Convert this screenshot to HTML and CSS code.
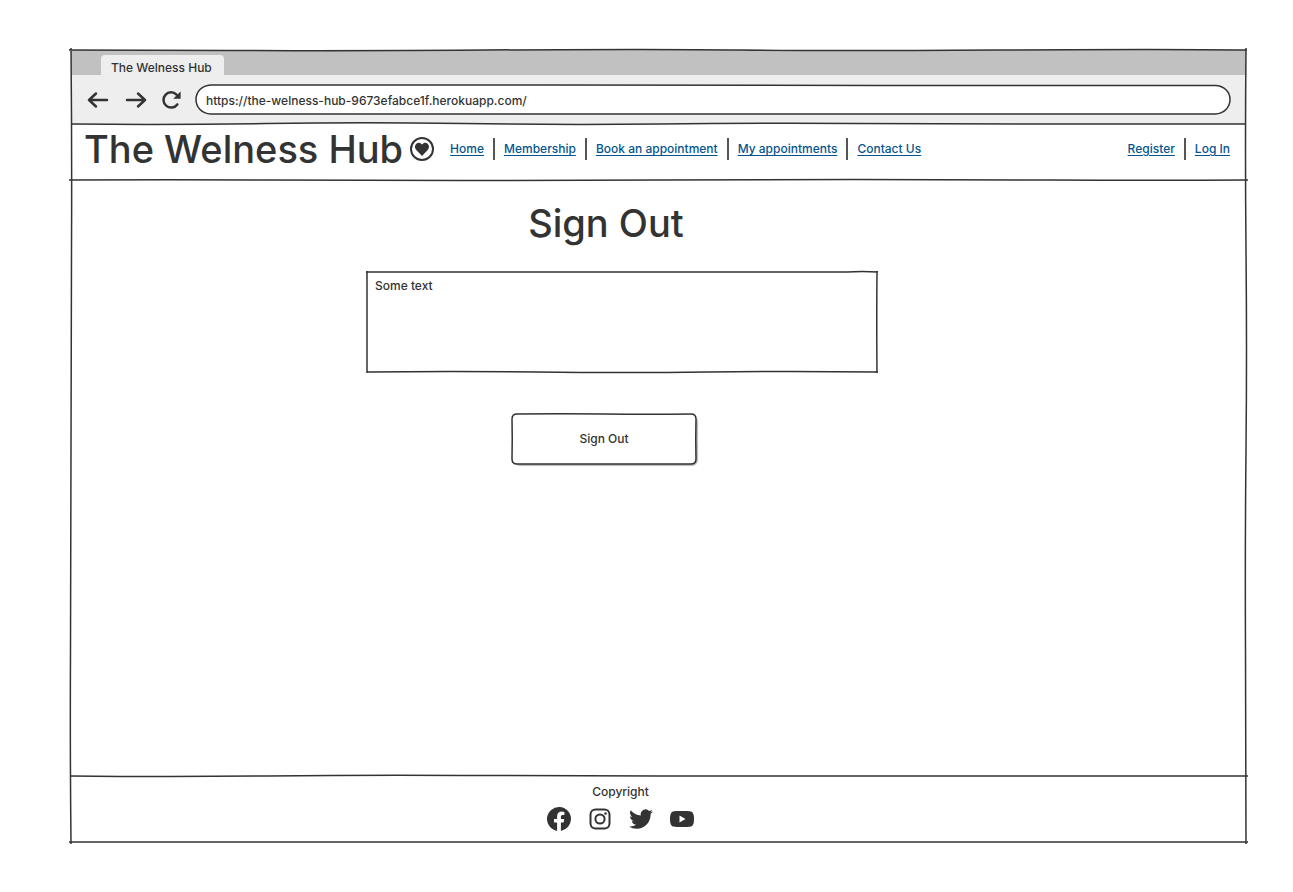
FILE: index.html
```html
<!DOCTYPE html>
<html lang="en">
<head>
<meta charset="utf-8">
<title>The Welness Hub</title>
<link rel="stylesheet" href="styles.css">
</head>
<body>
<div class="browser">
  <div class="tabs">
    <div class="tab">The Welness Hub</div>
  </div>
  <div class="toolbar">
    <button class="tool" type="button" aria-label="Back"><svg width="22" height="18" viewBox="0 0 22 18"><path d="M20 9H2M9 2.500L2 9l7 6.500"/></svg></button>
    <button class="tool" type="button" aria-label="Forward"><svg width="22" height="18" viewBox="0 0 22 18"><path d="M2 9h18M13 2.500L20 9l-7 6.500"/></svg></button>
    <button class="tool reload" type="button" aria-label="Reload"><svg width="20" height="18" viewBox="0 0 20 18"><path d="M14.500 3.600A7.600 7.600 0 1 0 15.300 13.400"/><path class="solid" d="M18.600 .400v7.400h-7.400z"/></svg></button>
    <div class="address">
      <input class="url" type="text" aria-label="Address" value="https://the-welness-hub-9673efabce1f.herokuapp.com/">
      <svg class="sketch" viewBox="0 0 1034 29" preserveAspectRatio="none"><path d="M15 0Q180-.5 350 0T685 .500T1019 .500C1039 1 1039 28 1019 29Q850 29.500 685 29T350 29T15 29C-5 28-5 1 15 0z"/></svg>
    </div>
    <svg class="rule" viewBox="0 0 1175 4" preserveAspectRatio="none"><path d="M0 2Q98 3 196 1.500T392 1.500T588 2T784 1.500T980 2T1175 2"/></svg>
  </div>
  <header class="header">
    <div class="brand">The Welness Hub</div>
    <svg class="heart" width="24" height="24" viewBox="0 0 24 24"><circle cx="12" cy="12" r="11"/><path d="M12 19L6.300 12.900C3.300 9.500 6 5.200 9.400 5.800Q11.100 6.200 12 7.600Q12.900 6.200 14.600 5.800C18 5.200 20.700 9.500 17.700 12.900z"/></svg>
    <nav class="nav" aria-label="Main">
      <a href="#">Home</a>
      <a href="#">Membership</a>
      <a href="#">Book an appointment</a>
      <a href="#">My appointments</a>
      <a href="#">Contact Us</a>
    </nav>
    <nav class="nav account" aria-label="Account">
      <a href="#">Register</a>
      <a href="#">Log In</a>
    </nav>
    <svg class="rule" viewBox="0 0 1175 4" preserveAspectRatio="none"><path d="M-2 2Q98 1.500 196 2T392 2.500T588 2T784 1.500T980 2T1177 2"/></svg>
  </header>
  <main class="main">
    <form class="form">
      <h1 class="title">Sign Out</h1>
      <div class="message">
        <p>Some text</p>
        <svg class="sketch" viewBox="0 0 510 100" preserveAspectRatio="none"><path d="M-1 0H480Q495-1 511 0M510-1Q509.500 50 510 101M511 100Q420 99 340 100T170 100T0 100M0 101V-1"/></svg>
      </div>
      <button class="submit" type="submit">Sign Out
        <svg class="sketch" viewBox="0 0 184 50" preserveAspectRatio="none"><path d="M5 0Q48-.5 92 0T179 0Q184 0 184 5Q183.500 25 184 45Q184 50 179 50Q136 50 92 50T5 50Q0 50 0 45Q.5 25 0 5Q0 0 5 0z"/></svg>
      </button>
    </form>
    <svg class="rule" viewBox="0 0 1175 4" preserveAspectRatio="none"><path d="M0 2Q98 3 196 2T392 1.500T588 2T784 2T980 2T1177 2"/></svg>
  </main>
  <footer class="footer">
    <p>Copyright</p>
    <div class="social">
      <a href="#" aria-label="Facebook"><svg width="24" height="24" viewBox="0 0 24 24"><path d="M24 12A12 12 0 1 0 10.100 23.900V15.500H7V12h3.100V9.400C10.100 6.300 12 4.600 14.700 4.600Q16 4.600 17.400 4.900V7.900H15.800C14.300 7.900 13.900 8.800 13.900 9.800V12h3.300l-.6 3.500h-2.700v8.400A12 12 0 0 0 24 12z"/></svg></a>
      <a href="#" aria-label="Instagram"><svg class="outline" width="24" height="24" viewBox="0 0 24 24"><rect x="2.500" y="2.500" width="19" height="19" rx="5"/><circle cx="12" cy="12" r="4.600"/><circle class="dot" cx="17.500" cy="6.500" r="1.300"/></svg></a>
      <a href="#" aria-label="Twitter"><svg width="24" height="24" viewBox="0 0 24 24"><path d="M24 4.600a10 10 0 0 1-2.800.8A4.900 4.900 0 0 0 23.300 2.700a10 10 0 0 1-3.100 1.200A4.920 4.920 0 0 0 11.800 8.400 14 14 0 0 1 1.700 3.200a4.920 4.920 0 0 0 1.500 6.600A4.900 4.900 0 0 1 1 9.200c0 2.300 1.600 4.400 3.900 4.900a5 5 0 0 1-2.200.1 4.900 4.900 0 0 0 4.600 3.400A9.900 9.900 0 0 1 0 19.500a14 14 0 0 0 7.600 2.200c9.100 0 14.300-7.700 14-14.600A10 10 0 0 0 24 4.600z"/></svg></a>
      <a href="#" aria-label="YouTube"><svg width="24" height="24" viewBox="0 0 24 24"><path fill-rule="evenodd" d="M12 4C18 4 21 4.200 22 5Q24 6.500 24 12T22 19C21 19.800 18 20 12 20S3 19.800 2 19Q0 17.500 0 12T2 5C3 4.200 6 4 12 4zM9.500 8.500v7l6-3.500z"/></svg></a>
    </div>
  </footer>
  <svg class="sketch" viewBox="0 0 1175 792" preserveAspectRatio="none"><path d="M-2 0Q80 0 160 .500T415 0T670 0T925 0T1176 0M1175-2Q1174 100 1175 200T1175 400T1174.500 600T1175 794M1177 792Q980 791.500 785 792T390 792T-2 792M0 794Q-1 700-.5 600T0 400T.5 200T0-2"/></svg>
</div>
</body>
</html>
```
FILE: styles.css
```css
* { box-sizing: border-box; }
body {
  margin: 0;
  padding: 50px 47px 50px 71px;
  background: #fff;
  color: #333;
  font: 500 12px/20px Inter, "Liberation Sans", sans-serif;
}
p, h1 { margin: 0; }
button, input { font: inherit; color: inherit; }
.browser {
  position: relative;
  display: flex;
  flex-direction: column;
  min-height: calc(100vh - 100px);
}
.sketch, .rule {
  position: absolute;
  left: 0;
  width: 100%;
  overflow: visible;
  fill: none;
  stroke: #333;
  stroke-width: 1.5px;
  pointer-events: none;
}
.sketch { top: 0; height: 100%; }
.rule { bottom: -2px; height: 4px; }
.sketch path, .rule path { vector-effect: non-scaling-stroke; }
.tabs {
  display: flex;
  height: 25px;
  padding: 5px 30px 0;
  background: #c1c1c1;
}
.tab {
  padding: 3px 12px 0 10px;
  border-radius: 4px 4px 0 0;
  background: #eee;
}
.toolbar {
  position: relative;
  display: flex;
  align-items: center;
  gap: 16px;
  height: 49px;
  padding: 0 16px;
  background: #eee;
}
.tool {
  display: flex;
  padding: 0;
  border: 0;
  background: none;
}
.tool svg {
  fill: none;
  stroke: #333;
  stroke-width: 2.5px;
  stroke-linecap: round;
  stroke-linejoin: round;
}
.tool .solid { fill: #333; stroke: none; }
.reload { margin: 0 -2px 0 -1px; }
.address { position: relative; flex: 1; height: 29px; }
.url {
  display: block;
  width: 100%;
  height: 100%;
  padding: 2px 10px 0;
  border: 0;
  border-radius: 15px;
  background: #fff;
}
.header {
  position: relative;
  display: flex;
  align-items: center;
  height: 56px;
  padding: 0 16px 6px 13px;
}
.brand { font-size: 38px; line-height: 50px; white-space: nowrap; }
.heart { margin: 0 16px 0 7px; fill: #333; flex: none; }
.heart circle { fill: none; stroke: #333; stroke-width: 2px; }
.nav { display: flex; align-items: center; white-space: nowrap; }
.nav a {
  display: flex;
  align-items: center;
  color: #04558f;
  text-decoration: underline;
  text-underline-offset: 2px;
}
.nav a + a::before {
  content: "";
  width: 2px;
  height: 22px;
  margin: 0 9px;
  background: #555;
}
.account { margin-left: auto; }
.main {
  position: relative;
  flex: 1;
  padding: 18px 73px 40px 0;
}
.form {
  display: flex;
  flex-direction: column;
  align-items: center;
  width: 510px;
  max-width: 100%;
  margin: 0 auto;
}
.title {
  margin: 0 32px 24px 0;
  font-size: 38px;
  line-height: 50px;
  font-weight: 500;
}
.message {
  position: relative;
  width: 100%;
  min-height: 100px;
  padding: 4px 8px;
}
.submit {
  position: relative;
  width: 184px;
  height: 50px;
  margin: 42px 36px 0 0;
  border: 0;
  border-radius: 6px;
  background: #fff;
  box-shadow: 2px 2px 1px #bbb;
}
.footer {
  display: flex;
  flex-direction: column;
  align-items: center;
  height: 66px;
  padding: 6px 76px 0 0;
}
.social { display: flex; gap: 17px; margin-top: 5px; }
.social a { display: flex; }
.social svg { fill: #333; }
.social .outline { fill: none; stroke: #333; stroke-width: 2px; }
.social .dot { fill: #333; stroke: none; }
```
